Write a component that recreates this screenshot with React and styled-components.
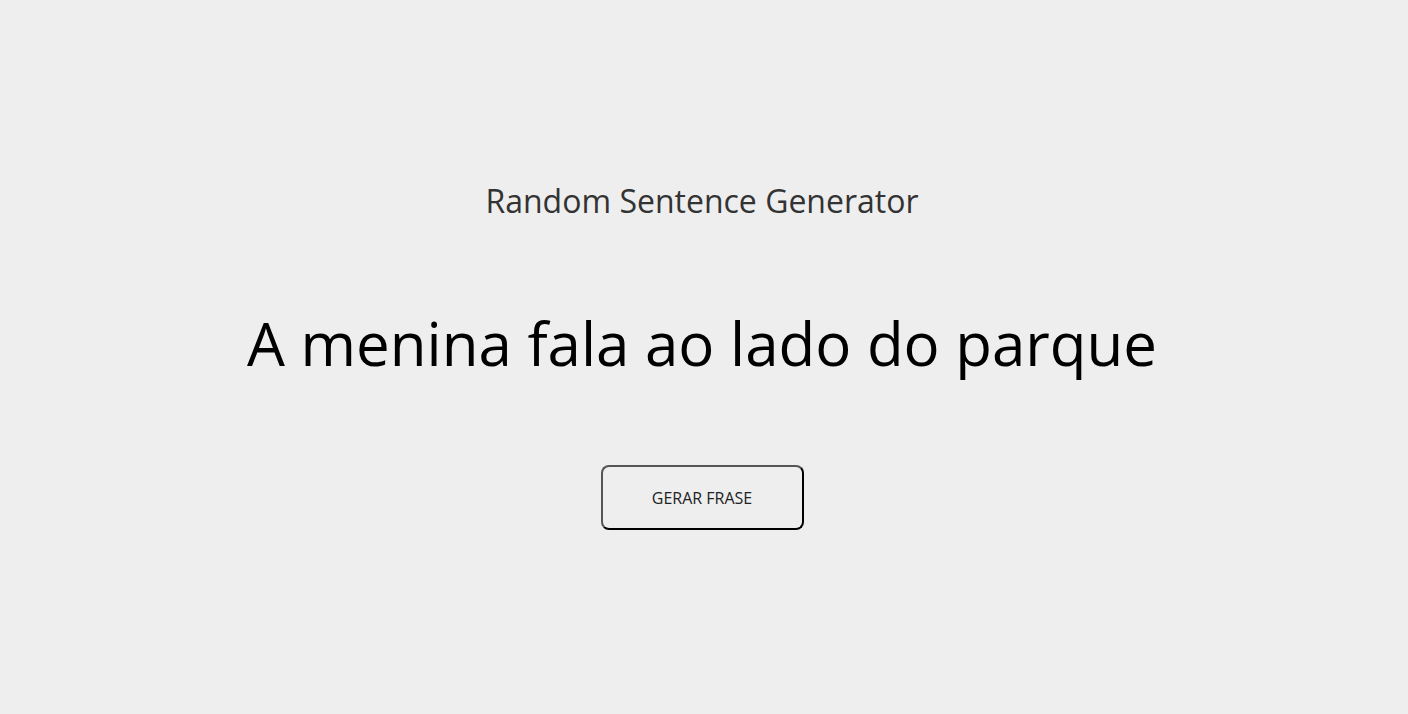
import styled, { createGlobalStyle } from 'styled-components';

const GlobalStyle = createGlobalStyle`
  body {
    margin: 0;
    background: #eeeeee;
    font-family: "Open Sans", sans-serif;
  }
`;

const Page = styled.main`
  min-height: 100vh;
  box-sizing: border-box;
  padding: 0 4px 5px 0;
  display: flex;
  flex-direction: column;
  align-items: center;
  justify-content: center;
  text-align: center;
`;

const Title = styled.h1`
  margin: 0;
  font-size: 32px;
  font-weight: 400;
  color: #333;
`;

const Sentence = styled.p`
  margin: 82px 0 0;
  font-size: 60px;
  line-height: 1.3;
  color: #000;
`;

const GenerateButton = styled.button`
  margin-top: 83px;
  width: 203px;
  height: 65px;
  background: transparent;
  border: 2px solid #000;
  border-top-color: #555;
  border-left-color: #555;
  border-radius: 8px;
  font-family: "Open Sans", sans-serif;
  font-size: 16px;
  color: #222;
  text-transform: uppercase;
  cursor: pointer;
`;

export default function App() {
  return (
    <>
      <GlobalStyle />
      <Page>
        <Title>Random Sentence Generator</Title>
        <Sentence>A menina fala ao lado do parque</Sentence>
        <GenerateButton>Gerar frase</GenerateButton>
      </Page>
    </>
  );
}
